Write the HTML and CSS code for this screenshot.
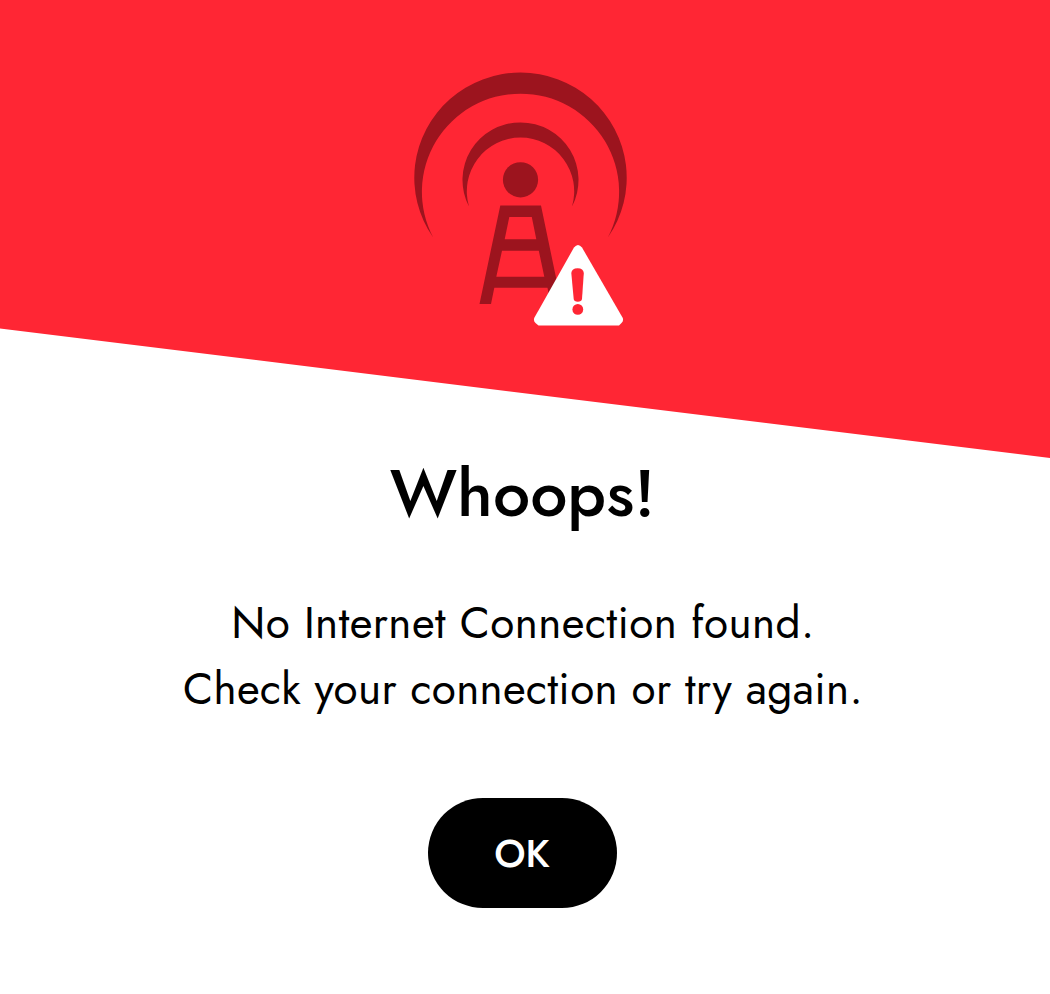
FILE: index.html
```html
<!DOCTYPE html>
<html lang="en">
<head>
<meta charset="utf-8">
<title>Whoops!</title>
<link rel="stylesheet" href="styles.css">
</head>
<body>
<main class="screen">
  <header class="hero">
    <svg class="signal" width="214" height="256" viewBox="413 71 214 256" aria-hidden="true">
      <g class="tower">
        <path d="M433.2 237.5A106.2 105.1 0 1 1 607.8 237.5A98.6 98.2 0 1 0 433.2 237.5Z"/>
        <path d="M469 206.5A58 57.6 0 1 1 572 206.5A53.7 53.7 0 1 0 469 206.5Z"/>
        <circle cx="520.5" cy="179.8" r="17.6"/>
        <path fill-rule="evenodd" d="M500.3 205.5H541L561.5 304H550.5L547.5 287.7H494.3L491 304H479.5ZM509.3 217L504.7 239.3H536.3L531.8 217ZM502 250.7L496.3 276.8H544.3L538.8 250.7Z"/>
      </g>
      <path class="alert" d="M574 247.5Q578 242.5 582 247.5L622.5 317.5Q624 320.5 621.5 323L619 325.5H538.5L535.5 323Q533 320.5 534.5 317.5Z"/>
      <path class="mark" d="M571.3 273Q571.8 268.2 577.6 268.2T583.8 273L582 299Q581.5 301.7 577.8 301.7T573.7 299Z"/>
      <circle class="mark" cx="577.8" cy="309.4" r="5.4"/>
    </svg>
  </header>
  <section class="content">
    <h1 class="title">Whoops!</h1>
    <p class="message"><span class="line first">No Internet Connection found.</span><span class="line second">Check your connection or try again.</span></p>
    <button class="ok" type="button">OK</button>
  </section>
</main>
</body>
</html>
```

FILE: styles.css
```css
* { box-sizing: border-box; }
body { margin: 0; background: #fff; color: #000; font-family: Jost, Lato, sans-serif; }
.screen { height: 994px; overflow: hidden; }
.hero {
  height: 458px;
  padding: 71px 0 0 413px;
  background: #ff2634;
  clip-path: polygon(0 0, 100% 0, 100% 100%, 0 328.5px);
}
.signal { display: block; overflow: visible; }
.tower { fill: #9c141e; }
.alert { fill: #fff; }
.mark { fill: #ff2634; }
.content {
  display: flex;
  flex-direction: column;
  align-items: center;
  padding-right: 5px;
}
.title { margin: 0; height: 80px; line-height: 70px; font-size: 66px; font-weight: 500; white-space: nowrap; }
.message { margin: 52px 0 0; padding-left: 1px; font-size: 44px; font-weight: 380; line-height: 66px; text-align: center; white-space: nowrap; }
.line { display: block; }
.first { letter-spacing: 0.45px; }
.second { letter-spacing: 0.35px; }
.ok {
  width: 189px;
  height: 110px;
  margin: 76px 0 0;
  padding: 0 1px 0 0;
  border: 0;
  border-radius: 55px;
  background: #000;
  color: #fff;
  font-family: inherit;
  font-size: 39px;
  font-weight: 500;
}
```
